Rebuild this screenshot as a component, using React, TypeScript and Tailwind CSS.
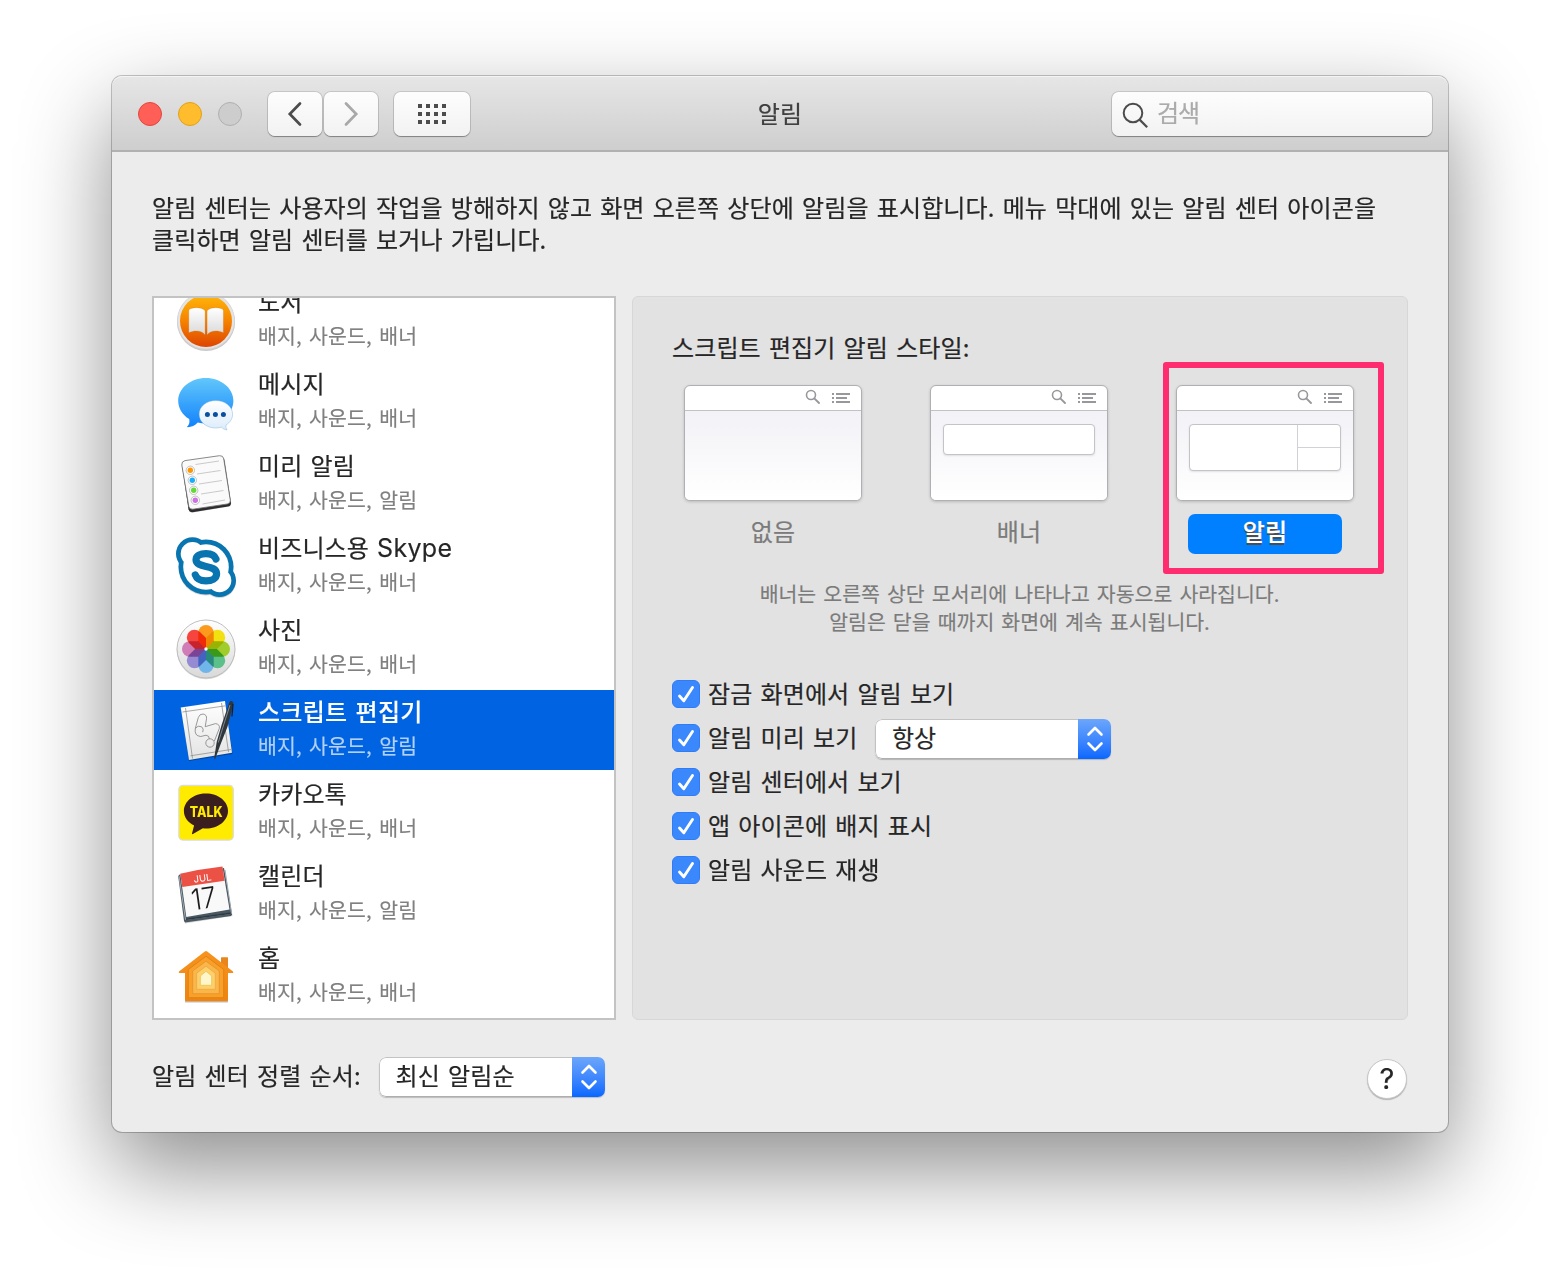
import React from "react";

const LATIN = "font-['Inter','Noto_Sans_CJK_KR',sans-serif]";

function BooksIcon() {
  return (
    <svg width="64" height="64" viewBox="0 0 64 64" className="overflow-visible">
      <defs>
        <linearGradient id="bk" x1="0" y1="0" x2="0" y2="1">
          <stop offset="0" stopColor="#ffb60a" />
          <stop offset="0.5" stopColor="#f58300" />
          <stop offset="1" stopColor="#de4500" />
        </linearGradient>
        <linearGradient id="bkp" x1="0" y1="0" x2="0" y2="1">
          <stop offset="0" stopColor="#ffffff" />
          <stop offset="1" stopColor="#d9d9d9" />
        </linearGradient>
      </defs>
      <circle cx="32" cy="34" r="29" fill="#000" opacity=".22" />
      <circle cx="32" cy="33" r="29" fill="#d2d2d2" />
      <circle cx="32" cy="32.6" r="28.2" fill="#e4e4e4" />
      <circle cx="32" cy="33" r="26" fill="url(#bk)" />
      <path d="M14.8 23c0-1 .6-1.800 1.600-2.200 5-1.800 10.800-1.400 14 1.200.5.4.7.9.7 1.500v23.500c-3-4.500-10-5.200-16.300-2.300z" fill="url(#bkp)" stroke="#c25a00" strokeOpacity=".35" strokeWidth=".6" />
      <path d="M49.400 23c0-1-.6-1.800-1.600-2.200-5-1.800-10.800-1.400-14 1.200-.5.4-.7.9-.7 1.500v23.500c3-4.500 10-5.200 16.300-2.300z" fill="url(#bkp)" stroke="#c25a00" strokeOpacity=".35" strokeWidth=".6" />
    </svg>
  );
}

function MessagesIcon() {
  return (
    <svg width="64" height="64" viewBox="0 0 64 64" className="overflow-visible">
      <defs>
        <linearGradient id="ms" x1="0" y1="0" x2="0" y2="1">
          <stop offset="0" stopColor="#62c7fb" />
          <stop offset="1" stopColor="#1282fc" />
        </linearGradient>
        <linearGradient id="ms2" x1="0" y1="0" x2="0" y2="1">
          <stop offset="0" stopColor="#ffffff" />
          <stop offset="1" stopColor="#dcecfa" />
        </linearGradient>
      </defs>
      <path d="M31.800 8C16.500 8 4.200 18.200 4.200 30.800c0 7.500 4.300 14.200 11 18.300.8 3.500-.2 6.300-2.400 8 4 .3 8.200-1.400 10.900-4.600 2.600.7 5.300 1 8.100 1C47 53.500 59.400 43.400 59.400 30.800S47 8 31.800 8z" fill="url(#ms)" />
      <path d="M41.800 30.600c-9.400 0-16.700 6-16.700 13.700S32.500 58 41.800 58c2 0 3.900-.3 5.700-.8 1.500 1.500 3.500 2.600 5.600 2.700-1-1.200-1.400-3-1.100-4.900 4.100-2.500 6.600-6.400 6.600-10.700 0-7.700-7.400-13.700-16.800-13.700z" fill="url(#ms2)" stroke="#5f9ed0" strokeOpacity=".45" strokeWidth=".8" />
      <g fill="#0b50a0">
        <circle cx="33.400" cy="44.400" r="2.500" />
        <circle cx="41.400" cy="44.400" r="2.500" />
        <circle cx="49.400" cy="44.400" r="2.500" />
      </g>
    </svg>
  );
}

function RemindersIcon() {
  const dots = [
    { x: 16.3, y: 18.3, c: "#ff9500" },
    { x: 18.3, y: 28.3, c: "#1badf8" },
    { x: 19.7, y: 38.3, c: "#63da38" },
    { x: 21.3, y: 48.3, c: "#cc73e1" },
  ];
  return (
    <svg width="64" height="64" viewBox="0 0 64 64" className="overflow-visible">
      <path d="M10.500 11.500 46.500 6q4-.5 4.600 3l6 41.500q.4 3.500-3 4.300L19 60.500q-3.500.4-4.200-2.500L8 14z" fill="#000" opacity=".18" />
      <path d="M10 9.500 46 4.800q3.600-.4 4.200 3l6.700 42.700q.4 3.300-3 4L18.500 60.200q-3.200.4-4-2.600L8 13.500q-.4-3.400 2-4z" fill="#2d2d2d" />
      <path d="M11 8.600 45.500 3.700q3.500-.4 4.200 3l6.600 41.600q.4 3-3 3.700L18.800 57.200q-3.200.3-4-2.800L7.800 13q-.4-3.700 3.200-4.400z" fill="#fafafa" stroke="#6c6c6c" strokeWidth=".8" />
      <path d="M21.500 12.500 45 9M23 22 46.500 18.500M25 32 48 28.500M27 42 49.500 38.500M28.500 52 51 48" stroke="#bcbcbc" strokeWidth=".8" />
      {dots.map((d) => (
        <g key={d.c}>
          <circle cx={d.x} cy={d.y} r="4.200" fill="#fff" stroke="#9a9a9a" strokeWidth=".6" />
          <circle cx={d.x} cy={d.y} r="2.700" fill={d.c} />
        </g>
      ))}
    </svg>
  );
}

function SkypeIcon() {
  return (
    <svg width="64" height="64" viewBox="0 0 64 64" className="overflow-visible">
      <g fill="#000" opacity=".16" transform="translate(0 1)">
        <circle cx="32" cy="33" r="27.500" />
        <circle cx="45.500" cy="46.500" r="16.500" />
      </g>
      <g fill="#0874b0">
        <circle cx="32" cy="33" r="27.500" />
        <circle cx="18.500" cy="19.800" r="16.500" />
        <circle cx="45.500" cy="46.500" r="16.500" />
      </g>
      <g fill="#fff">
        <circle cx="32" cy="33" r="22.800" />
        <circle cx="18.500" cy="19.800" r="11.800" />
        <circle cx="45.500" cy="46.500" r="11.800" />
      </g>
      <path d="M42 25C40.800 21.500 37.200 19.600 32 19.600c-5.700 0-10 2-10 6.200 0 4.300 4.800 5.400 10 6.600 5.600 1.200 10.600 2.500 10.600 7.300 0 4.900-4.800 7.200-10.600 7.200-5.400 0-9.300-2-10.700-6" fill="none" stroke="#0874b0" strokeWidth="7.200" strokeLinecap="round" />
    </svg>
  );
}

function PhotosIcon() {
  const petals = ["#fb9a1c", "#f3e010", "#a0cc2c", "#5cc08a", "#70b6ea", "#968bd2", "#d07cb6", "#f5453e"];
  return (
    <svg width="64" height="64" viewBox="0 0 64 64" className="overflow-visible">
      <defs>
        <linearGradient id="ph" x1="0" y1="0" x2="0" y2="1">
          <stop offset="0" stopColor="#ffffff" />
          <stop offset="1" stopColor="#d9d9d9" />
        </linearGradient>
      </defs>
      <circle cx="32" cy="34" r="29.300" fill="#000" opacity=".15" />
      <circle cx="32" cy="33" r="29" fill="url(#ph)" stroke="#b8b8b8" strokeWidth=".9" />
      <g className="isolate">
        {petals.map((c, i) => (
          <path
            key={c}
            d="M32 33 24.300 25.300V16.700a7.700 7.700 0 0 1 15.400 0V25.300z"
            fill={c}
            className="mix-blend-multiply"
            transform={`rotate(${i * 45} 32 33)`}
          />
        ))}
      </g>
      <circle cx="32" cy="33" r="1.700" fill="#fff" />
    </svg>
  );
}

function ScriptEditorIcon() {
  return (
    <svg width="64" height="64" viewBox="0 0 64 64" className="overflow-visible">
      <defs>
        <linearGradient id="se" x1="0" y1="0" x2="0" y2="1">
          <stop offset="0" stopColor="#ffffff" />
          <stop offset="1" stopColor="#e3e3e3" />
        </linearGradient>
      </defs>
      <path d="M7 10 51 4 58.500 56 15 63z" fill="#000" opacity=".3" />
      <path d="M6.700 9.500 51 3 58 54.700 15 62z" fill="url(#se)" />
      <path d="M8.500 14 51.500 7.800M16.500 57.800 57 51.500M11.500 10 18.500 60.500M47.500 5 54.500 54" stroke="#858585" strokeWidth=".7" />
      <g fill="none" stroke="#808080" strokeWidth=".8">
        <path d="M21.300 30.500 24.300 19.500q1.300-3.700 4.800-3.500 4 .8 3.400 4.800L31.200 28.700" />
        <path d="M21.300 30.500q2.500-3.800 6.400-1.700 2.500 2.200 1 5.400M21.300 30.500q-1.300 7.500 5.500 8l5.200-1.300q3.400.4 3.300 3.600" />
        <path d="M31.200 28.700 41.500 25.600q4.700.7 3.800 4.800L40.400 43" />
        <circle cx="36" cy="45" r="4.200" />
      </g>
      <path d="M55.500 4q1-1.500 2.600-.7 1.900 1 1.200 2.700L53.500 28.700 46.700 46 41 61.500 40.200 60 42.700 44 47.600 27z" fill="#2f363c" />
      <path d="M56 7 49.300 28 44.300 44.500" fill="none" stroke="#7f8991" strokeWidth="1" />
      <path d="M59 6.500 58 18" stroke="#1a1e22" strokeWidth="1.200" strokeLinecap="round" />
    </svg>
  );
}

function KakaoIcon() {
  return (
    <svg width="64" height="64" viewBox="0 0 64 64" className="overflow-visible">
      <rect x="4.800" y="5.400" width="54.500" height="54.700" rx="4" fill="#ffeb00" stroke="#dcdcdc" strokeWidth="1.200" />
      <path d="M32 13.600c-12.200 0-22.100 7.800-22.100 17.400 0 6.100 4 11.500 10.200 14.600l-2.100 8q0 .8.900.4l10-5.700q1.500.2 3.100.2c12.200 0 22-7.800 22-17.500s-9.800-17.400-22-17.400z" fill="#3b1e1e" />
      <text x="15.800" y="36.500" textLength="32.800" lengthAdjust="spacingAndGlyphs" fill="#ffeb00" className={`${LATIN} text-[14px] font-extrabold tracking-normal [-webkit-text-stroke:0.3px_#ffeb00]`}>
        TALK
      </text>
    </svg>
  );
}

function CalendarIcon() {
  return (
    <svg width="64" height="64" viewBox="0 0 64 64" className="overflow-visible">
      <path d="M5 15.500 51 8 58.500 54 11 61.500z" fill="#000" opacity=".18" />
      <path d="M4.200 14 6.200 12 50 6 58 52.600 57 54 11 60.400 10 59z" fill="#4a5862" />
      <path d="M5 14 11.500 57.500 57.500 51.400 51 8" fill="none" stroke="#9fabb3" strokeWidth="1" />
      <path d="M12 56.500 56.500 50.500 57 52 12 58z" fill="#2e3940" />
      <path d="M6.300 11.800 48.500 5 55.500 47.500 12.300 55z" fill="#f9f9f9" />
      <path d="M6.300 11.800Q27 7 48.500 4.600L50.600 18.800 8.300 25z" fill="#ec5146" />
      <g transform="rotate(-8 30 30)">
        <text x="30.500" y="19.500" textAnchor="middle" fill="#fff" className={`${LATIN} text-[9.500px] font-normal [-webkit-text-stroke:0px]`}>
          JUL
        </text>
        <text x="28.800" y="46.500" textAnchor="middle" textLength="25" lengthAdjust="spacingAndGlyphs" fill="#1c1c1c" className={`${LATIN} text-[29px] font-light [-webkit-text-stroke:0px]`}>
          17
        </text>
      </g>
    </svg>
  );
}

function HomeIcon() {
  return (
    <svg width="64" height="64" viewBox="0 0 64 64" className="overflow-visible">
      <defs>
        <linearGradient id="hm" x1="0" y1="0" x2="0" y2="1">
          <stop offset="0" stopColor="#f7931e" />
          <stop offset="1" stopColor="#ee8412" />
        </linearGradient>
      </defs>
      <path d="M11 56h43v2.500H11z" fill="#000" opacity=".25" />
      <path d="M47 13.800q0-.6.600-.6h5.800q.6 0 .6.600V30H47z" fill="#e8851c" />
      <path d="M32 7q.6 0 1.200.5L59 27.500q.9 1-.3 1.600H54V56q0 1.300-1.300 1.300H12.400Q11 57.300 11 56V29.100H5.400q-1.300-.6-.4-1.600L30.800 7.500Q31.400 7 32 7z" fill="url(#hm)" />
      <path d="M32 12.200 49.700 25.500V53.700H14.300V25.500z" fill="#f9a02b" stroke="#dc7d0c" strokeWidth=".8" />
      <path d="M32 17.200 45.300 27V49.700H18.700V27z" fill="#fbb64a" stroke="#e4912a" strokeWidth=".8" />
      <path d="M32 22.200 41.300 29.200V45.300H22.700V29.200z" fill="#fdd06b" stroke="#e9a741" strokeWidth=".8" />
      <path d="M32 27.200 37.700 32V41.300H26.300V32z" fill="#fff6ca" stroke="#f1c35c" strokeWidth=".9" />
    </svg>
  );
}

const apps = [
  { name: "도서", detail: "배지, 사운드, 배너", Icon: BooksIcon },
  { name: "메시지", detail: "배지, 사운드, 배너", Icon: MessagesIcon },
  { name: "미리 알림", detail: "배지, 사운드, 알림", Icon: RemindersIcon },
  { name: "비즈니스용 Skype", detail: "배지, 사운드, 배너", Icon: SkypeIcon },
  { name: "사진", detail: "배지, 사운드, 배너", Icon: PhotosIcon },
  { name: "스크립트 편집기", detail: "배지, 사운드, 알림", Icon: ScriptEditorIcon, selected: true },
  { name: "카카오톡", detail: "배지, 사운드, 배너", Icon: KakaoIcon },
  { name: "캘린더", detail: "배지, 사운드, 알림", Icon: CalendarIcon },
  { name: "홈", detail: "배지, 사운드, 배너", Icon: HomeIcon },
];

function AppRow({ name, detail, Icon, selected }: (typeof apps)[number] & { selected?: boolean }) {
  const latin = name.indexOf("Skype");
  return (
    <li className={selected ? "flex h-20 shrink-0 bg-[#0063e1] pl-5 pt-2" : "flex h-20 shrink-0 pl-5 pt-2"}>
      <Icon />
      <div className="-mt-2 ml-5 flex flex-col whitespace-nowrap pt-[5px]">
        <span className={selected ? "h-[34px] text-[24px] font-medium leading-[32px] tracking-[0.250px] text-white [-webkit-text-stroke:0.1px]" : "h-[34px] text-[24px] leading-[32px] text-[#262626]"}>
          {latin > 0 ? (
            <>
              {name.slice(0, latin)}
              <span className="font-['Inter'] text-[25px] tracking-[0.3px] [-webkit-text-stroke:0.15px]">Skype</span>
            </>
          ) : (
            name
          )}
        </span>
        <span className={selected ? "text-[20.500px] leading-[32px] tracking-[0.100px] text-[#b3d0f6] [-webkit-text-stroke:0.15px] [word-spacing:2.700px]" : "text-[20.500px] leading-[32px] tracking-[0.100px] text-[#808080] [-webkit-text-stroke:0.15px] [word-spacing:2.700px]"}>
          {detail}
        </span>
      </div>
    </li>
  );
}

function Popup({ label, className }: { label: string; className: string }) {
  return (
    <div className={`flex h-10 overflow-hidden rounded-[7px] bg-white shadow-[0_1px_1px_rgba(0,0,0,0.2)] ${className}`}>
      <div className="flex flex-1 items-center rounded-l-[7px] border border-r-0 border-[#c3c3c3] border-b-[#aeaeae] pl-[15.500px]">
        <span className="-mt-1">{label}</span>
      </div>
      <div className="flex w-[33px] items-center justify-center bg-gradient-to-b from-[#6ca6fb] to-[#0667ff]">
        <svg width="18" height="26" viewBox="0 0 18 26" fill="none" stroke="#fff" strokeWidth="2.600" strokeLinecap="round" strokeLinejoin="round">
          <path d="M2.500 8.500 9 2l6.500 6.500M2.500 17.500 9 24l6.500-6.500" />
        </svg>
      </div>
    </div>
  );
}

function Preview({ kind }: { kind: "none" | "banner" | "alert" }) {
  return (
    <div className="flex h-[116px] w-[178px] flex-col overflow-hidden rounded-[6px] border border-[#b0b0b4] bg-white shadow-[0_1px_3px_rgba(0,0,0,0.18)]">
      <div className="flex h-[25px] shrink-0 justify-end border-b border-[#c2c2c6] pr-[10px]">
        <svg width="48" height="24" viewBox="0 0 48 24" fill="none" stroke="#98989c">
          <circle cx="8" cy="9" r="4.500" strokeWidth="1.600" />
          <path d="m11.300 12.300 4.700 4.700" strokeWidth="1.900" strokeLinecap="round" />
          <path d="M33 8h14M33 12h11M33 16h14" strokeWidth="1.800" />
          <path d="M29 8h2M29 12h2M29 16h2" strokeWidth="1.800" />
        </svg>
      </div>
      <div className="flex flex-1 justify-center bg-gradient-to-b from-[#f2f2f7] to-white pt-[13px]">
        {kind === "banner" && (
          <div className="h-[31px] w-[152px] rounded-[4px] border border-[#c3c3c8] bg-white shadow-[0_1px_2px_rgba(0,0,0,0.1)]" />
        )}
        {kind === "alert" && (
          <div className="flex h-[47px] w-[152px] overflow-hidden rounded-[4px] border border-[#c3c3c8] bg-white shadow-[0_1px_2px_rgba(0,0,0,0.1)]">
            <div className="flex-1 border-r border-[#d2d2d6]" />
            <div className="w-[42px]">
              <div className="h-[23px] border-b border-[#d2d2d6]" />
            </div>
          </div>
        )}
      </div>
    </div>
  );
}

function Check({ label, children }: { label: string; children?: React.ReactNode }) {
  return (
    <div className="flex h-11 items-center whitespace-nowrap">
      <span className="flex h-7 w-7 items-center justify-center rounded-[6px] border border-[#2f7cf6] bg-[#3b88fd]">
        <svg width="28" height="28" viewBox="0 0 28 28" fill="none" stroke="#fff" strokeWidth="2.900" strokeLinecap="round" strokeLinejoin="round" className="shrink-0">
          <path d="m7.500 16 4.300 4.800L20.500 7.500" />
        </svg>
      </span>
      <span className="-mt-0.5 ml-2">{label}</span>
      {children}
    </div>
  );
}

export default function App() {
  return (
    <div className="h-[1280px] w-[1560px] overflow-hidden bg-white px-28 pt-[76px] font-['Noto_Sans_CJK_KR',sans-serif] text-[24px] leading-8 tracking-[0.120px] text-[#262626] [-webkit-text-stroke:0.2px] [word-spacing:2.600px]">
      <div className="flex h-[1056px] w-[1336px] flex-col rounded-[10px] bg-[#ececec] shadow-[0_0_0_1px_rgba(0,0,0,0.22),0_36px_90px_rgba(0,0,0,0.45)]">
        <header className="flex h-[76px] shrink-0 items-center rounded-t-[10px] border-b-2 border-t border-b-[#b1b1b1] border-t-[#f4f4f4] bg-gradient-to-b from-[#e6e6e6] to-[#cecece] pl-[26px] pr-4">
          <div className="flex w-[332px] shrink-0 items-center">
            <span className="h-6 w-6 shrink-0 rounded-full border border-[#e2463f] bg-[#ff5f57]" />
            <span className="ml-4 h-6 w-6 shrink-0 rounded-full border border-[#e1a116] bg-[#ffbd2e]" />
            <span className="ml-4 h-6 w-6 shrink-0 rounded-full border border-[#b0b0b0] bg-[#cdcdcd]" />
            <span className="ml-[26px] flex h-11 w-[54px] shrink-0 items-center justify-center rounded-[7px] bg-gradient-to-b from-[#fdfdfd] to-[#f2f2f2] shadow-[0_0_0_1px_rgba(0,0,0,0.12),0_1px_1px_rgba(0,0,0,0.3)]">
              <svg width="16" height="26" viewBox="0 0 16 26" fill="none" stroke="#4c4c4c" strokeWidth="2.700" strokeLinecap="round">
                <path d="M13 2.500 2.800 13 13 23.500" />
              </svg>
            </span>
            <span className="ml-[2px] flex h-11 w-[54px] shrink-0 items-center justify-center rounded-[7px] bg-gradient-to-b from-[#fdfdfd] to-[#f2f2f2] shadow-[0_0_0_1px_rgba(0,0,0,0.12),0_1px_1px_rgba(0,0,0,0.3)]">
              <svg width="16" height="26" viewBox="0 0 16 26" fill="none" stroke="#a8a8a8" strokeWidth="2.700" strokeLinecap="round">
                <path d="M3 2.500 13.200 13 3 23.500" />
              </svg>
            </span>
            <span className="ml-4 flex h-11 w-[76px] shrink-0 items-center justify-center rounded-[7px] bg-gradient-to-b from-[#fdfdfd] to-[#f2f2f2] shadow-[0_0_0_1px_rgba(0,0,0,0.12),0_1px_1px_rgba(0,0,0,0.3)]">
              <span className="grid grid-cols-4 gap-1">
                {Array.from({ length: 12 }, (_, i) => (
                  <span key={i} className="h-1 w-1 bg-[#4c4c4c]" />
                ))}
              </span>
            </span>
          </div>
          <h1 className="flex-1 pb-0.5 pr-[22px] text-center text-[#404040]">알림</h1>
          <div className="flex h-11 w-[320px] items-center rounded-[7px] bg-gradient-to-b from-[#fdfdfd] to-[#f2f2f2] pl-[10px] shadow-[0_0_0_1px_rgba(0,0,0,0.12),0_1px_1px_rgba(0,0,0,0.3)]">
            <svg width="28" height="28" viewBox="0 0 28 28" fill="none" stroke="#4c4c4c" strokeWidth="2">
              <circle cx="11" cy="13" r="9.300" />
              <path d="m17.600 19.600 7.600 7.600" strokeWidth="2.200" />
            </svg>
            <span className="-mt-1 ml-[7px] tracking-[-1px] text-[#ababab]">검색</span>
          </div>
        </header>

        <main className="flex flex-1 flex-col px-10 pt-[39px]">
          <p className="h-[105px] whitespace-nowrap">
            알림 센터는 사용자의 작업을 방해하지 않고 화면 오른쪽 상단에 알림을 표시합니다. 메뉴 막대에 있는 알림 센터 아이콘을
            <br />
            클릭하면 알림 센터를 보거나 가립니다.
          </p>

          <div className="flex h-[724px] gap-4">
            <ul className="flex w-[464px] flex-col gap-[2px] overflow-hidden border-2 border-[#c3c3c3] bg-white [&>li:first-child]:-mt-[18px]">
              {apps.map((a) => (
                <AppRow key={a.name} {...a} />
              ))}
            </ul>

            <section className="flex w-[776px] flex-col rounded-[6px] border border-[#d7d7d7] bg-[#e2e2e2] px-[39px] pt-[34px]">
              <h2 className="h-[54px]">스크립트 편집기 알림 스타일:</h2>
              <div className="flex gap-[68px] pl-3">
                <div className="flex flex-col items-center text-[#7b7b7b]">
                  <Preview kind="none" />
                  <span className="mt-[13px] h-10 leading-[34px]">없음</span>
                </div>
                <div className="flex flex-col items-center text-[#7b7b7b]">
                  <Preview kind="banner" />
                  <span className="mt-[13px] h-10 leading-[34px]">배너</span>
                </div>
                <div className="relative flex flex-col items-center">
                  <Preview kind="alert" />
                  <span className="mt-[13px] h-10 w-[154px] rounded-[7px] bg-[#0080ff] text-center font-medium leading-[34px] text-white [text-shadow:0_2px_0_#4d4d4d]">
                    알림
                  </span>
                  <div className="absolute -left-[13px] -top-[23px] h-[212px] w-[221px] rounded-[3px] border-[6px] border-[#ff2d70]" />
                </div>
              </div>
              <p className="mt-[25px] -ml-px text-center text-[20.500px] leading-7 tracking-[0px] text-[#7b7b7b] [-webkit-text-stroke:0.15px] [word-spacing:2.500px]">
                배너는 오른쪽 상단 모서리에 나타나고 자동으로 사라집니다.
                <br />
                알림은 닫을 때까지 화면에 계속 표시됩니다.
              </p>
              <div className="mt-[37px] flex flex-col">
                <Check label="잠금 화면에서 알림 보기" />
                <Check label="알림 미리 보기">
                  <Popup label="항상" className="ml-[18px] mt-[2px] w-[236px]" />
                </Check>
                <Check label="알림 센터에서 보기" />
                <Check label="앱 아이콘에 배지 표시" />
                <Check label="알림 사운드 재생" />
              </div>
            </section>
          </div>

          <footer className="flex h-[110px] items-start pt-[37px]">
            <span className="mt-[2px] w-[227px] whitespace-nowrap">알림 센터 정렬 순서:</span>
            <Popup label="최신 알림순" className="w-[226px]" />
            <span className={`ml-auto mr-px mt-[2px] flex h-10 w-10 items-center justify-center rounded-full border border-[#c6c6c6] bg-white text-[29px] font-normal shadow-[0_1px_1px_rgba(0,0,0,0.25)] ${LATIN}`}>
              ?
            </span>
          </footer>
        </main>
      </div>
    </div>
  );
}
